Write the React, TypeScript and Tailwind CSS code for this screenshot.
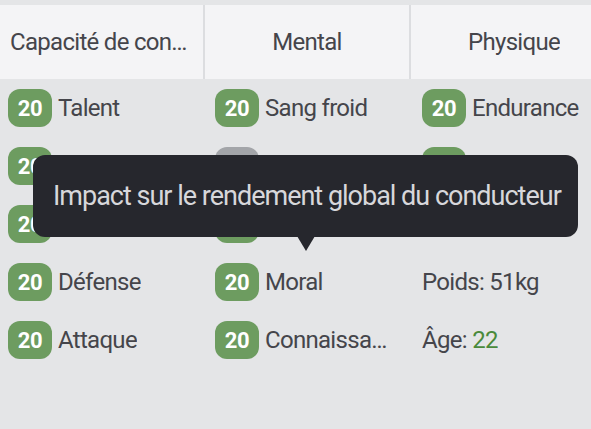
import React from "react";

type Cell =
  | { kind: "stat"; value: number; label: string; gray?: boolean }
  | { kind: "text"; label: string; value?: string; green?: boolean };

const rows: Cell[][] = [
  [
    { kind: "stat", value: 20, label: "Talent" },
    { kind: "stat", value: 20, label: "Sang froid" },
    { kind: "stat", value: 20, label: "Endurance" },
  ],
  [
    { kind: "stat", value: 20, label: "Régularité" },
    { kind: "stat", value: 12, label: "Calme", gray: true },
    { kind: "stat", value: 20, label: "Force" },
  ],
  [
    { kind: "stat", value: 20, label: "Agilité" },
    { kind: "stat", value: 20, label: "Courage" },
    { kind: "text", label: "Taille: ", value: "1m55" },
  ],
  [
    { kind: "stat", value: 20, label: "Défense" },
    { kind: "stat", value: 20, label: "Moral" },
    { kind: "text", label: "Poids: 51kg" },
  ],
  [
    { kind: "stat", value: 20, label: "Attaque" },
    { kind: "stat", value: 20, label: "Connaissance" },
    { kind: "text", label: "Âge: ", value: "22", green: true },
  ],
];

function CellView({ cell }: { cell: Cell }) {
  if (cell.kind === "stat") {
    return (
      <div className="flex items-center h-[38px] pr-[28px] min-w-0">
        <div
          className={
            cell.gray
              ? "shrink-0 w-[44px] h-[38px] rounded-[12px] bg-[#a3a5a9] flex items-center justify-center text-white font-bold text-[22px] tracking-[-0.3px]"
              : "shrink-0 w-[44px] h-[38px] rounded-[12px] bg-[#6d9c60] flex items-center justify-center text-white font-bold text-[22px] tracking-[-0.3px]"
          }
        >
          {cell.value}
        </div>
        <span className="ml-[6px] truncate text-[24px] tracking-[-0.7px] text-[#45454b]">{cell.label}</span>
      </div>
    );
  }
  return (
    <div className="flex items-center h-[38px] pr-[28px] min-w-0">
      <span className="truncate text-[24px] tracking-[-0.7px] text-[#45454b]">
        {cell.label}
        {cell.value ? (
          <span className={cell.green ? "text-[#4a8a3b]" : "text-[#45454b]"}>{cell.value}</span>
        ) : null}
      </span>
    </div>
  );
}

export default function App() {
  return (
    <div className="relative w-[591px] h-[429px] overflow-hidden bg-[#e4e5e7] font-['Roboto',sans-serif]">
      <div className="pt-[5px]">
        <div className="flex w-[630px] h-[74px] bg-[#f4f4f6] text-[24px] tracking-[-0.7px] text-[#45454b]">
          <div className="w-[205px] shrink-0 flex items-center justify-center px-[10px] border-r-2 border-[#dcdde0] min-w-0">
            <span className="truncate">Capacité de conduite</span>
          </div>
          <div className="w-[206px] shrink-0 flex items-center justify-center px-[10px] border-r-2 border-[#dcdde0]">
            <span className="truncate">Mental</span>
          </div>
          <div className="w-[206px] shrink-0 flex items-center justify-center px-[10px]">
            <span className="truncate">Physique</span>
          </div>
        </div>
      </div>
      <div className="grid grid-cols-[207px_207px_207px] w-[629px] pl-[8px] pt-[10px] gap-y-[20px]">
        {rows.map((r, i) => (
          <React.Fragment key={i}>
            {r.map((c, j) => (
              <CellView key={j} cell={c} />
            ))}
          </React.Fragment>
        ))}
      </div>

      <div className="absolute left-[33px] top-[155px] w-[545px] h-[82px] rounded-[12px] bg-[#26272d] flex items-center pl-[20px]">
        <span className="text-[27px] tracking-[-1px] text-[#d7d7db] whitespace-nowrap">
          Impact sur le rendement global du conducteur
        </span>
        <div className="absolute left-[264px] top-[81px] w-0 h-0 border-l-[9px] border-r-[9px] border-t-[15px] border-l-transparent border-r-transparent border-t-[#26272d]" />
      </div>
    </div>
  );
}
